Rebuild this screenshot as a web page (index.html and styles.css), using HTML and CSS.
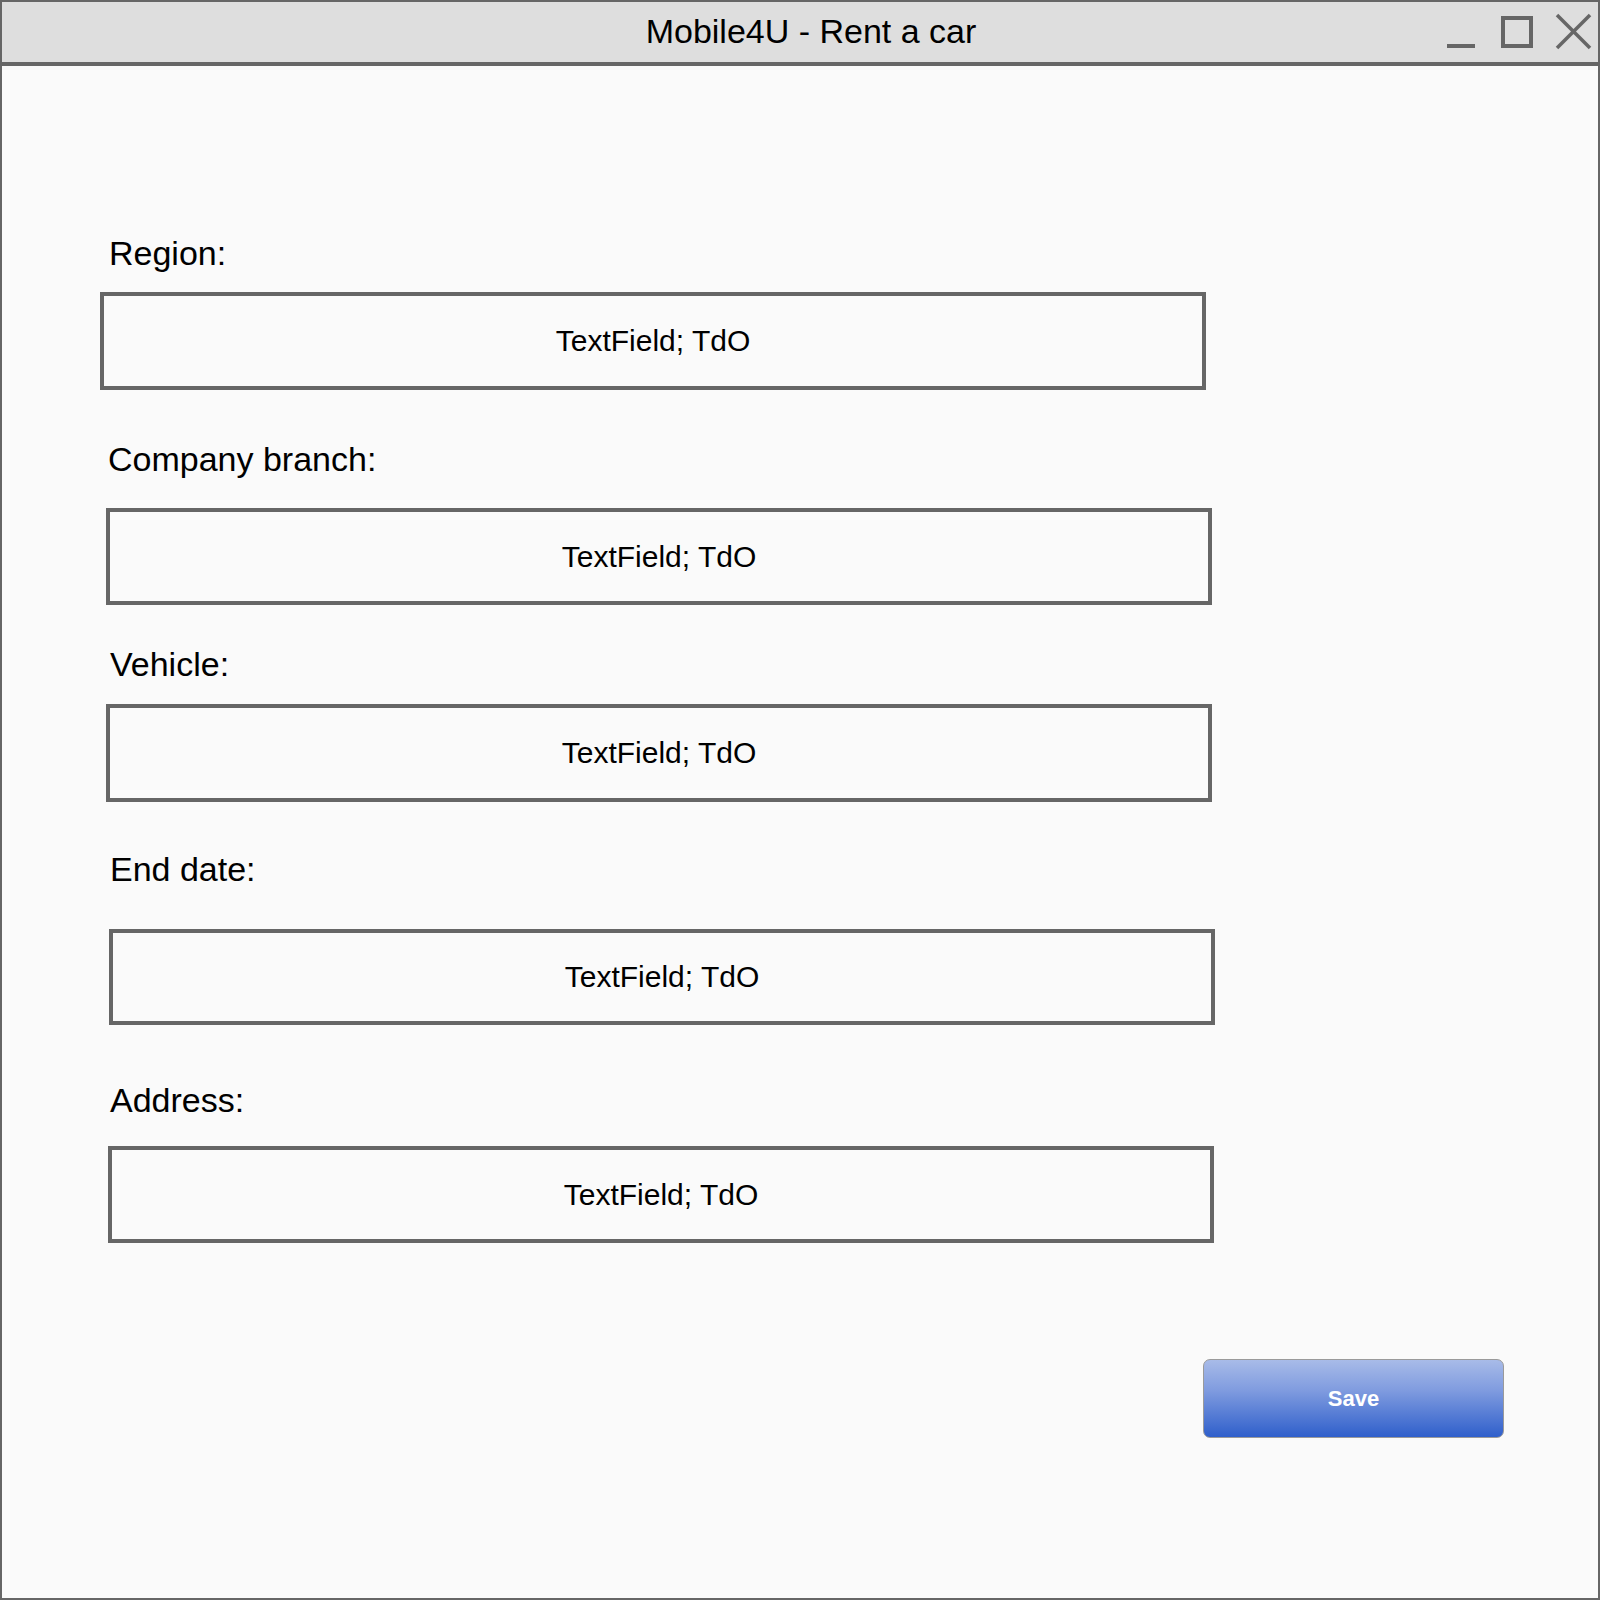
FILE: index.html
```html
<!DOCTYPE html>
<html>
<head>
<meta charset="utf-8">
<link rel="stylesheet" href="styles.css">
</head>
<body>
<div class="window">
  <div class="titlebar">
    <div class="title">Mobile4U - Rent a car</div>
    <svg class="controls" width="158" height="50" viewBox="0 0 158 50">
      <rect x="7" y="36" width="28" height="4" fill="#666"/>
      <rect x="63" y="10" width="28" height="28" fill="none" stroke="#666" stroke-width="4"/>
      <line x1="117" y1="7" x2="150" y2="40" stroke="#666" stroke-width="3.5"/>
      <line x1="150" y1="7" x2="117" y2="40" stroke="#666" stroke-width="3.5"/>
    </svg>
  </div>
  <div class="content">
    <div class="group g1">
      <div class="label">Region:</div>
      <div class="field">TextField; TdO</div>
    </div>
    <div class="group g2">
      <div class="label">Company branch:</div>
      <div class="field">TextField; TdO</div>
    </div>
    <div class="group g3">
      <div class="label">Vehicle:</div>
      <div class="field">TextField; TdO</div>
    </div>
    <div class="group g4">
      <div class="label">End date:</div>
      <div class="field">TextField; TdO</div>
    </div>
    <div class="group g5">
      <div class="label">Address:</div>
      <div class="field">TextField; TdO</div>
    </div>
    <div class="actions">
      <button class="save">Save</button>
    </div>
  </div>
</div>
</body>
</html>
```
FILE: styles.css
```css
html, body {
  margin: 0;
  padding: 0;
  background: #fafafa;
}
body {
  font-family: "Liberation Sans", Arial, sans-serif;
  color: #000;
}
.window {
  width: 1600px;
  height: 1600px;
  box-sizing: border-box;
  border: 2px solid #666;
  background: #fafafa;
  display: flex;
  flex-direction: column;
}
.titlebar {
  position: relative;
  height: 60px;
  background: #dedede;
  border-bottom: 4px solid #666;
  flex: none;
}
.title {
  font-size: 34px;
  line-height: 58px;
  text-align: center;
  padding-left: 22px;
}
.controls {
  position: absolute;
  right: 0;
  top: 6px;
}
.content {
  display: flex;
  flex-direction: column;
  flex: 1;
}
.label {
  font-size: 34px;
  line-height: 38px;
  white-space: nowrap;
}
.field {
  box-sizing: border-box;
  width: 1106px;
  border: 4px solid #666;
  font-size: 30px;
  display: flex;
  align-items: center;
  justify-content: center;
  background: #fafafa;
}
.g1 { margin-top: 168px; }
.g1 .label { margin-left: 107px; }
.g1 .field { margin-top: 20px; margin-left: 98px; height: 98px; }

.g2 { margin-top: 50px; }
.g2 .label { margin-left: 106px; }
.g2 .field { margin-top: 30px; margin-left: 104px; height: 97px; }

.g3 { margin-top: 40px; }
.g3 .label { margin-left: 108px; }
.g3 .field { margin-top: 21px; margin-left: 104px; height: 98px; }

.g4 { margin-top: 48px; }
.g4 .label { margin-left: 108px; }
.g4 .field { margin-top: 41px; margin-left: 107px; height: 96px; }

.g5 { margin-top: 56px; }
.g5 .label { margin-left: 108px; }
.g5 .field { margin-top: 27px; margin-left: 106px; height: 97px; }

.actions {
  display: flex;
  justify-content: flex-end;
  margin-top: 116px;
  margin-right: 94px;
}
.save {
  width: 301px;
  height: 79px;
  box-sizing: border-box;
  border: 1.5px solid #9a9a9a;
  border-radius: 7px;
  background: linear-gradient(to bottom, #a8bbe8 0%, #7f9bdf 40%, #2f5fcb 100%);
  color: #fff;
  font-family: "Liberation Sans", Arial, sans-serif;
  font-weight: bold;
  font-size: 22px;
  padding: 0;
}
```
